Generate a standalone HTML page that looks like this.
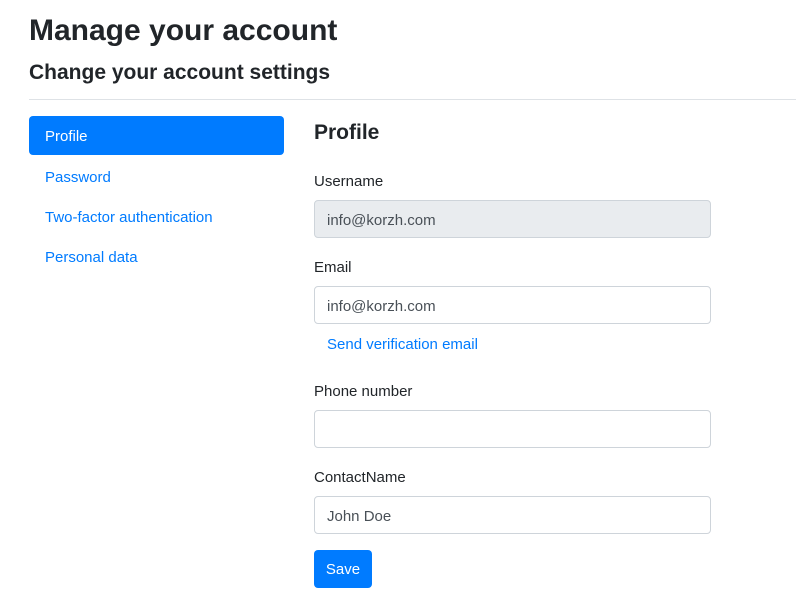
<!DOCTYPE html>
<html><head><meta charset="utf-8"><style>
*{box-sizing:border-box;margin:0;padding:0}
body{width:796px;height:615px;overflow:hidden;background:#fff;font-family:"Liberation Sans",sans-serif;color:#212529;font-size:15px;position:relative}
.a{position:absolute}
h1{position:absolute;left:29px;top:12px;font-size:30px;font-weight:700;line-height:38px}
h4{position:absolute;left:29px;top:59px;font-size:21px;font-weight:700;line-height:28px}
hr{position:absolute;left:29px;top:99px;width:767px;border:0;border-top:1px solid #dee2e6}
.pill{left:29px;top:116px;width:255px;height:39px;background:#007bff;color:#fff;border-radius:4px;padding:0 16px;line-height:41px}
.nav{left:45px;color:#007bff;line-height:20px}
h3{position:absolute;left:314px;top:119px;font-size:21px;font-weight:700;line-height:28px}
.lbl{left:314px;line-height:20px}
.in{left:314px;width:397px;height:38px;border:1px solid #ced4da;border-radius:4px;padding:0 12px;line-height:39px;color:#495057}
.btn{left:314px;top:550px;width:58px;height:38px;background:#007bff;color:#fff;border-radius:4px;text-align:center;line-height:40px}
</style></head><body>
<h1>Manage your account</h1>
<h4>Change your account settings</h4>
<hr>
<div class="a pill">Profile</div>
<div class="a nav" style="top:168px">Password</div>
<div class="a nav" style="top:208px">Two-factor authentication</div>
<div class="a nav" style="top:248px">Personal data</div>
<h3>Profile</h3>
<div class="a lbl" style="top:172px">Username</div>
<div class="a in" style="top:200px;background:#e9ecef">info@korzh.com</div>
<div class="a lbl" style="top:258px">Email</div>
<div class="a in" style="top:286px">info@korzh.com</div>
<div class="a" style="left:327px;top:335px;color:#007bff;line-height:20px">Send verification email</div>
<div class="a lbl" style="top:382px">Phone number</div>
<div class="a in" style="top:410px"></div>
<div class="a lbl" style="top:468px">ContactName</div>
<div class="a in" style="top:496px">John Doe</div>
<div class="a btn">Save</div>
</body></html>
